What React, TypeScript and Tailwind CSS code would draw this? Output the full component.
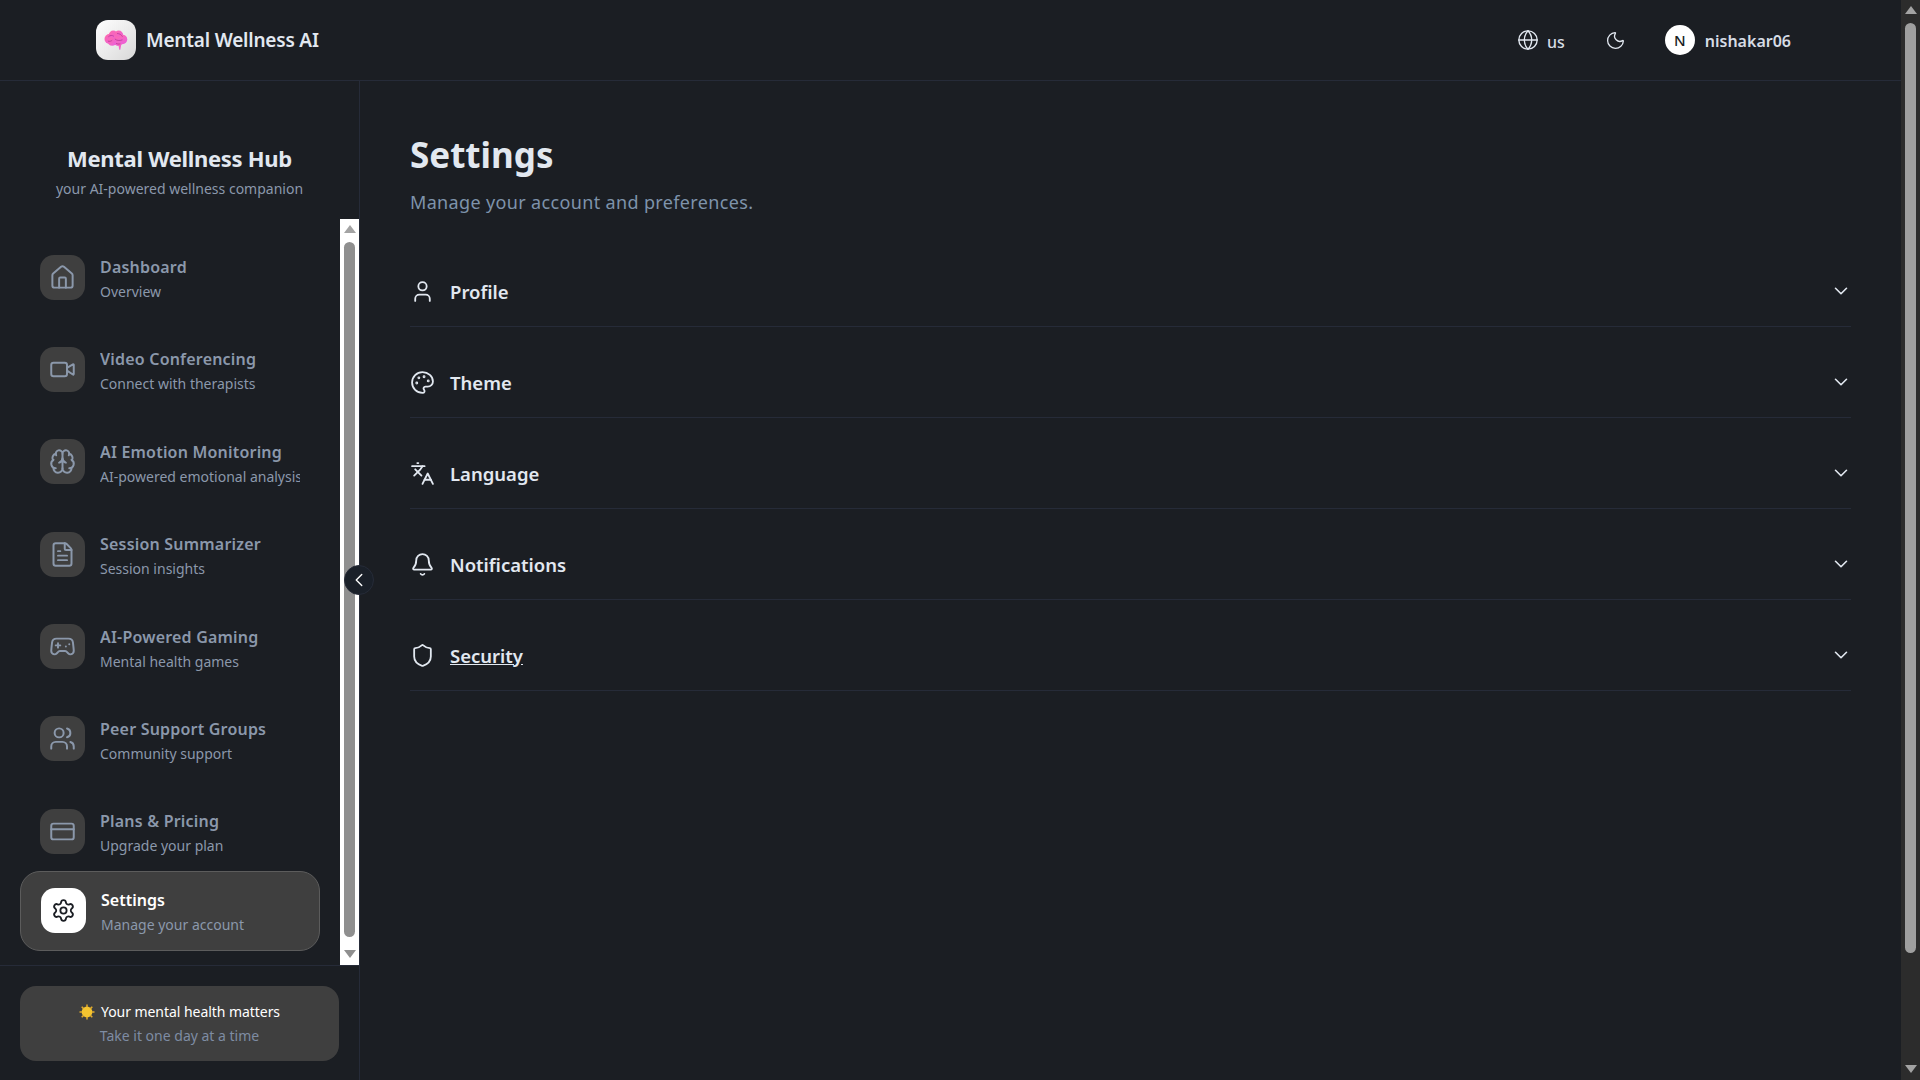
import { JSX } from "react";
import {
  Bell,
  Brain,
  ChevronDown,
  ChevronLeft,
  CreditCard,
  FileText,
  Gamepad2,
  Globe,
  House,
  Languages,
  LucideIcon,
  Moon,
  Palette,
  Settings,
  Shield,
  User,
  Users,
  Video,
} from "lucide-react";

type NavItem = { title: string; sub: string; icon: LucideIcon };

const navItems: NavItem[] = [
  { title: "Dashboard", sub: "Overview", icon: House },
  { title: "Video Conferencing", sub: "Connect with therapists", icon: Video },
  { title: "AI Emotion Monitoring", sub: "AI-powered emotional analysis", icon: Brain },
  { title: "Session Summarizer", sub: "Session insights", icon: FileText },
  { title: "AI-Powered Gaming", sub: "Mental health games", icon: Gamepad2 },
  { title: "Peer Support Groups", sub: "Community support", icon: Users },
  { title: "Plans & Pricing", sub: "Upgrade your plan", icon: CreditCard },
];

const sections: { label: string; icon: LucideIcon; underline?: boolean }[] = [
  { label: "Profile", icon: User },
  { label: "Theme", icon: Palette },
  { label: "Language", icon: Languages },
  { label: "Notifications", icon: Bell },
  { label: "Security", icon: Shield, underline: true },
];

function BrainLogo(): JSX.Element {
  return (
    <svg width="26" height="26" viewBox="0 0 24 24">
      <defs>
        <linearGradient id="brainFill" x1="0" y1="0" x2="1" y2="1">
          <stop offset="0" stopColor="#ff6aa8" />
          <stop offset="1" stopColor="#e85fe0" />
        </linearGradient>
      </defs>
      <g fill="url(#brainFill)">
        <circle cx="6" cy="11" r="4.600" />
        <circle cx="9.500" cy="7.500" r="4.200" />
        <circle cx="14.500" cy="7.500" r="4.200" />
        <circle cx="18" cy="11.500" r="4.400" />
        <circle cx="14" cy="13" r="4.500" />
        <circle cx="8.500" cy="13.500" r="3.800" />
        <path d="M14 15l3 .5-1 5.500h-1z" />
      </g>
      <path
        d="M5 9c1.500-1.500 3.500-1.500 5-.5M13 6c2 0 4 1 5 3M4.500 13c1.500.5 3 .2 4-.8M11 11c1.500 1.500 4 2 7 .8M12 15c1 .7 2.500 1 4 .5"
        fill="none"
        stroke="#c23fa2"
        strokeWidth="0.9"
      />
    </svg>
  );
}

function Header(): JSX.Element {
  return (
    <header className="h-[81px] shrink-0 border-b border-[#262b38] flex items-center justify-between pl-[96px] pr-[110px]">
      <div className="flex items-center gap-[10px]">
        <div className="w-10 h-10 rounded-xl bg-gradient-to-br from-white to-[#d8d8d8] flex items-center justify-center">
          <BrainLogo />
        </div>
        <span className="mt-[1px] text-[19px] tracking-[-0.2px] font-semibold text-[#e2e8f0]">Mental Wellness AI</span>
      </div>
      <div className="flex items-center">
        <Globe size={22} strokeWidth={1.5} className="text-[#e2e8f0]" />
        <span className="ml-[8px] mt-[3px] text-[16px] font-medium text-[#d6dce5]">us</span>
        <Moon size={21} strokeWidth={1.5} className="ml-[40px] text-[#e2e8f0]" />
        <div className="ml-[39px] w-[30px] h-[30px] rounded-full bg-white flex items-center justify-center text-[15px] font-medium text-[#1a1d23]">
          N
        </div>
        <span className="ml-[10px] mt-[1px] text-[16px] font-semibold text-[#d6dce5]">nishakar06</span>
      </div>
    </header>
  );
}

function NavRow({ item }: { item: NavItem }): JSX.Element {
  const Icon = item.icon;
  return (
    <div className="ml-5 h-[80px] w-[300px] px-5 flex items-center gap-[15px]">
      <div className="w-[45px] h-[45px] shrink-0 rounded-[14px] bg-[#3f3f3f] flex items-center justify-center">
        <Icon size={27} strokeWidth={1.75} className="text-[#8b98ab]" />
      </div>
      <div className="w-[200px] pt-[3px] overflow-hidden whitespace-nowrap">
        <div className="text-[16px] leading-[24px] tracking-[0.2px] font-semibold text-[#8b98ab]">{item.title}</div>
        <div className="mt-[3px] text-[14px] leading-[20px] text-[#8b98ab]">{item.sub}</div>
      </div>
    </div>
  );
}

function NavScrollbar(): JSX.Element {
  return (
    <div className="w-[19px] h-full shrink-0 bg-white flex flex-col items-center">
      <div className="mt-[6px] w-0 h-0 border-x-[6px] border-x-transparent border-b-[8px] border-b-[#a3a3a3]" />
      <div className="mt-[9px] w-[11px] h-[695px] rounded-full bg-[#8f8f8f]" />
      <div className="mt-[13px] w-0 h-0 border-x-[6px] border-x-transparent border-t-[8px] border-t-[#8f8f8f]" />
    </div>
  );
}

function Sidebar(): JSX.Element {
  return (
    <aside className="relative w-[360px] shrink-0 border-r border-[#262b38] flex flex-col">
      <div className="h-[138px] shrink-0 flex flex-col items-center pt-[61px]">
        <div className="text-[22px] leading-[32px] tracking-[-0.3px] font-bold text-[#e2e8f0]">Mental Wellness Hub</div>
        <div className="mt-[4px] text-[14px] leading-[22px] text-[#8b98ab]">your AI-powered wellness companion</div>
      </div>
      <div className="h-[747px] shrink-0 flex border-b border-[#262b38]">
        <nav className="w-[340px] pt-[18px] flex flex-col gap-[12.4px]">
          {navItems.map((item) => (
            <NavRow key={item.title} item={item} />
          ))}
          <div className="-mt-[12.400px] ml-5 w-[300px] h-[80px] rounded-[20px] border border-[#5c5c5c] bg-[#3f3f3f] px-5 flex items-center gap-[15px]">
            <div className="w-[45px] h-[45px] shrink-0 -mt-[1px] rounded-[14px] bg-white flex items-center justify-center">
              <Settings size={25} strokeWidth={1.75} className="text-[#1a1d23]" />
            </div>
            <div className="pt-[2px] whitespace-nowrap">
              <div className="text-[16px] leading-[24px] font-semibold text-white">Settings</div>
              <div className="mt-[1px] text-[14px] leading-[24px] text-[#8b98ab]">Manage your account</div>
            </div>
          </div>
        </nav>
        <NavScrollbar />
      </div>
      <div className="flex-1 px-5 pt-[20px]">
        <div className="w-[319px] h-[75px] rounded-2xl bg-[#3f3f3f] flex flex-col items-center justify-center">
          <div className="flex items-center gap-[6px] text-[14px] leading-[24px] text-white">
            <svg width="16" height="16" viewBox="0 0 16 16">
              <circle cx="8" cy="8" r="5.400" fill="#f4c430" />
              <path
                d="M8 .5v2.400M8 13.100v2.400M.5 8h2.400M13.100 8h2.400M2.700 2.700l1.700 1.700M11.600 11.600l1.700 1.700M2.700 13.300l1.700-1.700M11.600 4.400l1.700-1.700"
                stroke="#e0a92c"
                strokeWidth="1.500"
              />
            </svg>
            <span className="tracking-[-0.05px]">Your mental health matters</span>
          </div>
          <div className="text-[14px] leading-[24px] text-[#7e8ca3]">Take it one day at a time</div>
        </div>
      </div>
      <div className="absolute left-[344px] top-[484px] w-[30px] h-[30px] rounded-full bg-[#1a2029] border border-[#262b38] flex items-center justify-center z-10">
        <ChevronLeft size={22} strokeWidth={1.5} className="text-white" />
      </div>
    </aside>
  );
}

function SettingsPage(): JSX.Element {
  return (
    <main className="flex-1 px-[50px] pt-[50px]">
      <h1 className="text-[35px] leading-[48px] font-bold text-[#e2e8f0]">Settings</h1>
      <p className="mt-[9px] text-[18px] leading-[28px] tracking-[0.35px] text-[#7e93ab]">Manage your account and preferences.</p>
      <div className="mt-[20px]">
        {sections.map((section) => {
          const Icon = section.icon;
          return (
            <div key={section.label} className="h-[91px] pb-[22.500px] border-b border-[#262b38] flex items-end justify-between">
              <div className="h-[24px] flex items-center gap-[15px]">
                <Icon size={25} strokeWidth={1.75} className="text-[#e2e8f0]" />
                <span className={section.underline ? "text-[18.500px] font-semibold text-[#e2e8f0] underline" : "text-[18.500px] font-semibold text-[#e2e8f0]"}>
                  {section.label}
                </span>
              </div>
              <ChevronDown size={22} strokeWidth={1.75} className="-mr-[1px] mb-[2px] text-[#e2e8f0]" />
            </div>
          );
        })}
      </div>
    </main>
  );
}

function PageScrollbar(): JSX.Element {
  return (
    <div className="w-[19px] shrink-0 bg-[#2c2c2c] flex flex-col items-center">
      <div className="mt-[6px] w-0 h-0 border-x-[6px] border-x-transparent border-b-[8px] border-b-[#a3a3a3]" />
      <div className="mt-[9px] w-[11px] h-[930px] rounded-full bg-[#9f9f9f]" />
      <div className="mt-[112px] w-0 h-0 border-x-[6px] border-x-transparent border-t-[8px] border-t-[#a3a3a3]" />
    </div>
  );
}

export default function App(): JSX.Element {
  return (
    <div className="w-[1920px] h-[1080px] overflow-hidden flex bg-[#1b1e23] font-['Noto_Sans',sans-serif]">
      <div className="flex-1 min-w-0 flex flex-col">
        <Header />
        <div className="flex-1 min-h-0 flex">
          <Sidebar />
          <SettingsPage />
        </div>
      </div>
      <PageScrollbar />
    </div>
  );
}
